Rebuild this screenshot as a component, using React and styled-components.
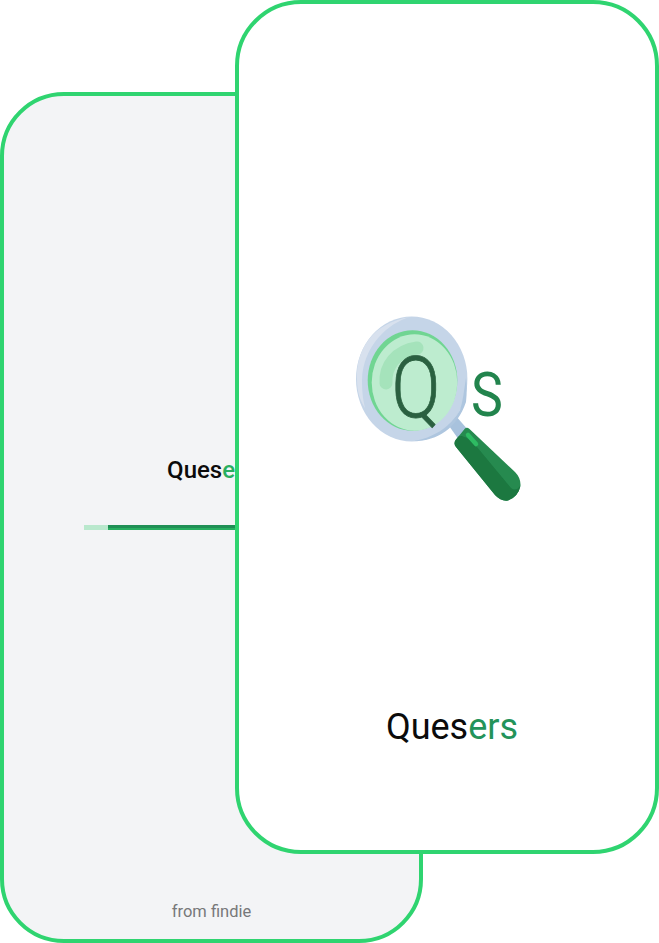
import React from 'react';
import styled, { createGlobalStyle } from 'styled-components';

const GlobalStyle = createGlobalStyle`
	html, body {
		margin: 0;
		padding: 0;
		background: #fff;
		font-family: Roboto, "Liberation Sans", sans-serif;
	}
	* {
		box-sizing: border-box;
	}
`;

const Stage = styled.div`
	position: relative;
	width: 659px;
	height: 943px;
	padding-top: 92px;
	overflow: hidden;
`;

const Card = styled.div`
	display: flex;
	flex-direction: column;
	align-items: center;
	border: 4px solid #2fd470;
`;

const BackCard = styled(Card)`
	width: 423px;
	height: 851px;
	padding-top: 362px;
	border-radius: 64px;
	background: #f3f4f6;
`;

const FrontCard = styled(Card)`
	position: absolute;
	top: 0;
	left: 235px;
	width: 424px;
	height: 854px;
	padding-top: 296px;
	border-radius: 66px;
	background: #fff;
`;

const Name = styled.div`
	font-size: ${(props) => props.size}px;
	font-weight: ${(props) => props.weight};
	line-height: 1;
	color: #0b0b0b;

	span {
		color: ${(props) => props.accent};
	}
`;

const Progress = styled.div`
	width: 255px;
	height: 5px;
	margin-top: 43px;
	padding-left: 24px;
	background: #b9e8cd;
`;

const ProgressFill = styled.div`
	height: 100%;
	background: linear-gradient(#1f8f55 0 50%, #27ae60 50%);
`;

const Footer = styled.div`
	margin-top: auto;
	margin-bottom: 18px;
	font-size: 16.5px;
	line-height: 18px;
	color: #77787a;
`;

const Logo = styled.svg`
	display: block;
	width: 200px;
	height: 210px;
	margin-left: -14px;
	flex: 0 0 auto;
`;

const FrontName = styled(Name)`
	margin-top: 199px;
	margin-left: 10px;
`;

function LogoMark() {
	return (
		<Logo viewBox="340 300 200 210">
			<defs>
				<filter id="soft" x="-5%" y="-5%" width="110%" height="110%">
					<feGaussianBlur stdDeviation="0.35" />
				</filter>
				<clipPath id="handle">
					<path d="M465 428.5 Q467 427 469.5 429 L515 472 Q521 478 520.5 486 Q518 497 508 500.5 Q501 501.5 495 495 L456 447 Q453 443 456 439.5 Z" />
				</clipPath>
			</defs>
			<g filter="url(#soft)">
				<path d="M447 423 L455 415 L469 431 L459 440 Z" fill="#a8c2dd" />
				<ellipse cx="411.7" cy="379" rx="55.7" ry="62.5" fill="#c5d5e8" />
				<path d="M357 379 C356 350 372 323 410 317 C388 323 363 346 362 380 C362 392 363 400 365 408 C360 400 357 392 357 379 Z" fill="#d8e1ee" />
				<path d="M460 410 C450 428 432 438 414 441 C438 441 457 428 466 402 C467 392 467 384 466 378 C464 390 463 401 460 410 Z" fill="#aec6df" />
				<ellipse cx="412.5" cy="380.5" rx="44.8" ry="50.3" fill="#6fd592" />
				<ellipse cx="414.5" cy="382.5" rx="42.8" ry="48.2" fill="#bdeccf" />
				<path d="M386 383 C385 366 396 351 417 348" fill="none" stroke="#a5e3bb" strokeWidth="13" strokeLinecap="round" />
				<text x="416" y="417" textAnchor="middle" fontFamily="Roboto, sans-serif" fontWeight="300" fontSize="86" fill="#2b6040" stroke="#2b6040" strokeWidth="0.8" transform="translate(416 0) scale(0.84 1) translate(-416 0)">
					Q
				</text>
				<text x="487" y="416" textAnchor="middle" fontFamily="Roboto, sans-serif" fontWeight="400" fontSize="61" fill="#23844e" transform="translate(487 0) scale(0.88 1) translate(-487 0)">
					S
				</text>
				<g clipPath="url(#handle)">
					<rect x="440" y="420" width="90" height="90" fill="#278a50" />
					<path d="M450 437 L462 436 Q470 438 477 447 L511 488 Q516 492 520 486 L525 505 L490 505 L450 450 Z" fill="#1a7840" />
				</g>
				<path d="M468 435 L476 444" stroke="#2dbb62" strokeWidth="4.5" strokeLinecap="round" />
			</g>
		</Logo>
	);
}

export default function App() {
	return (
		<Stage>
			<GlobalStyle />
			<BackCard>
				<Name size={24} weight={500} accent="#27ae60">
					Ques<span>ers</span>
				</Name>
				<Progress>
					<ProgressFill />
				</Progress>
				<Footer>from findie</Footer>
			</BackCard>
			<FrontCard>
				<LogoMark />
				<FrontName size={36} weight={400} accent="#23935a">
					Ques<span>ers</span>
				</FrontName>
			</FrontCard>
		</Stage>
	);
}
